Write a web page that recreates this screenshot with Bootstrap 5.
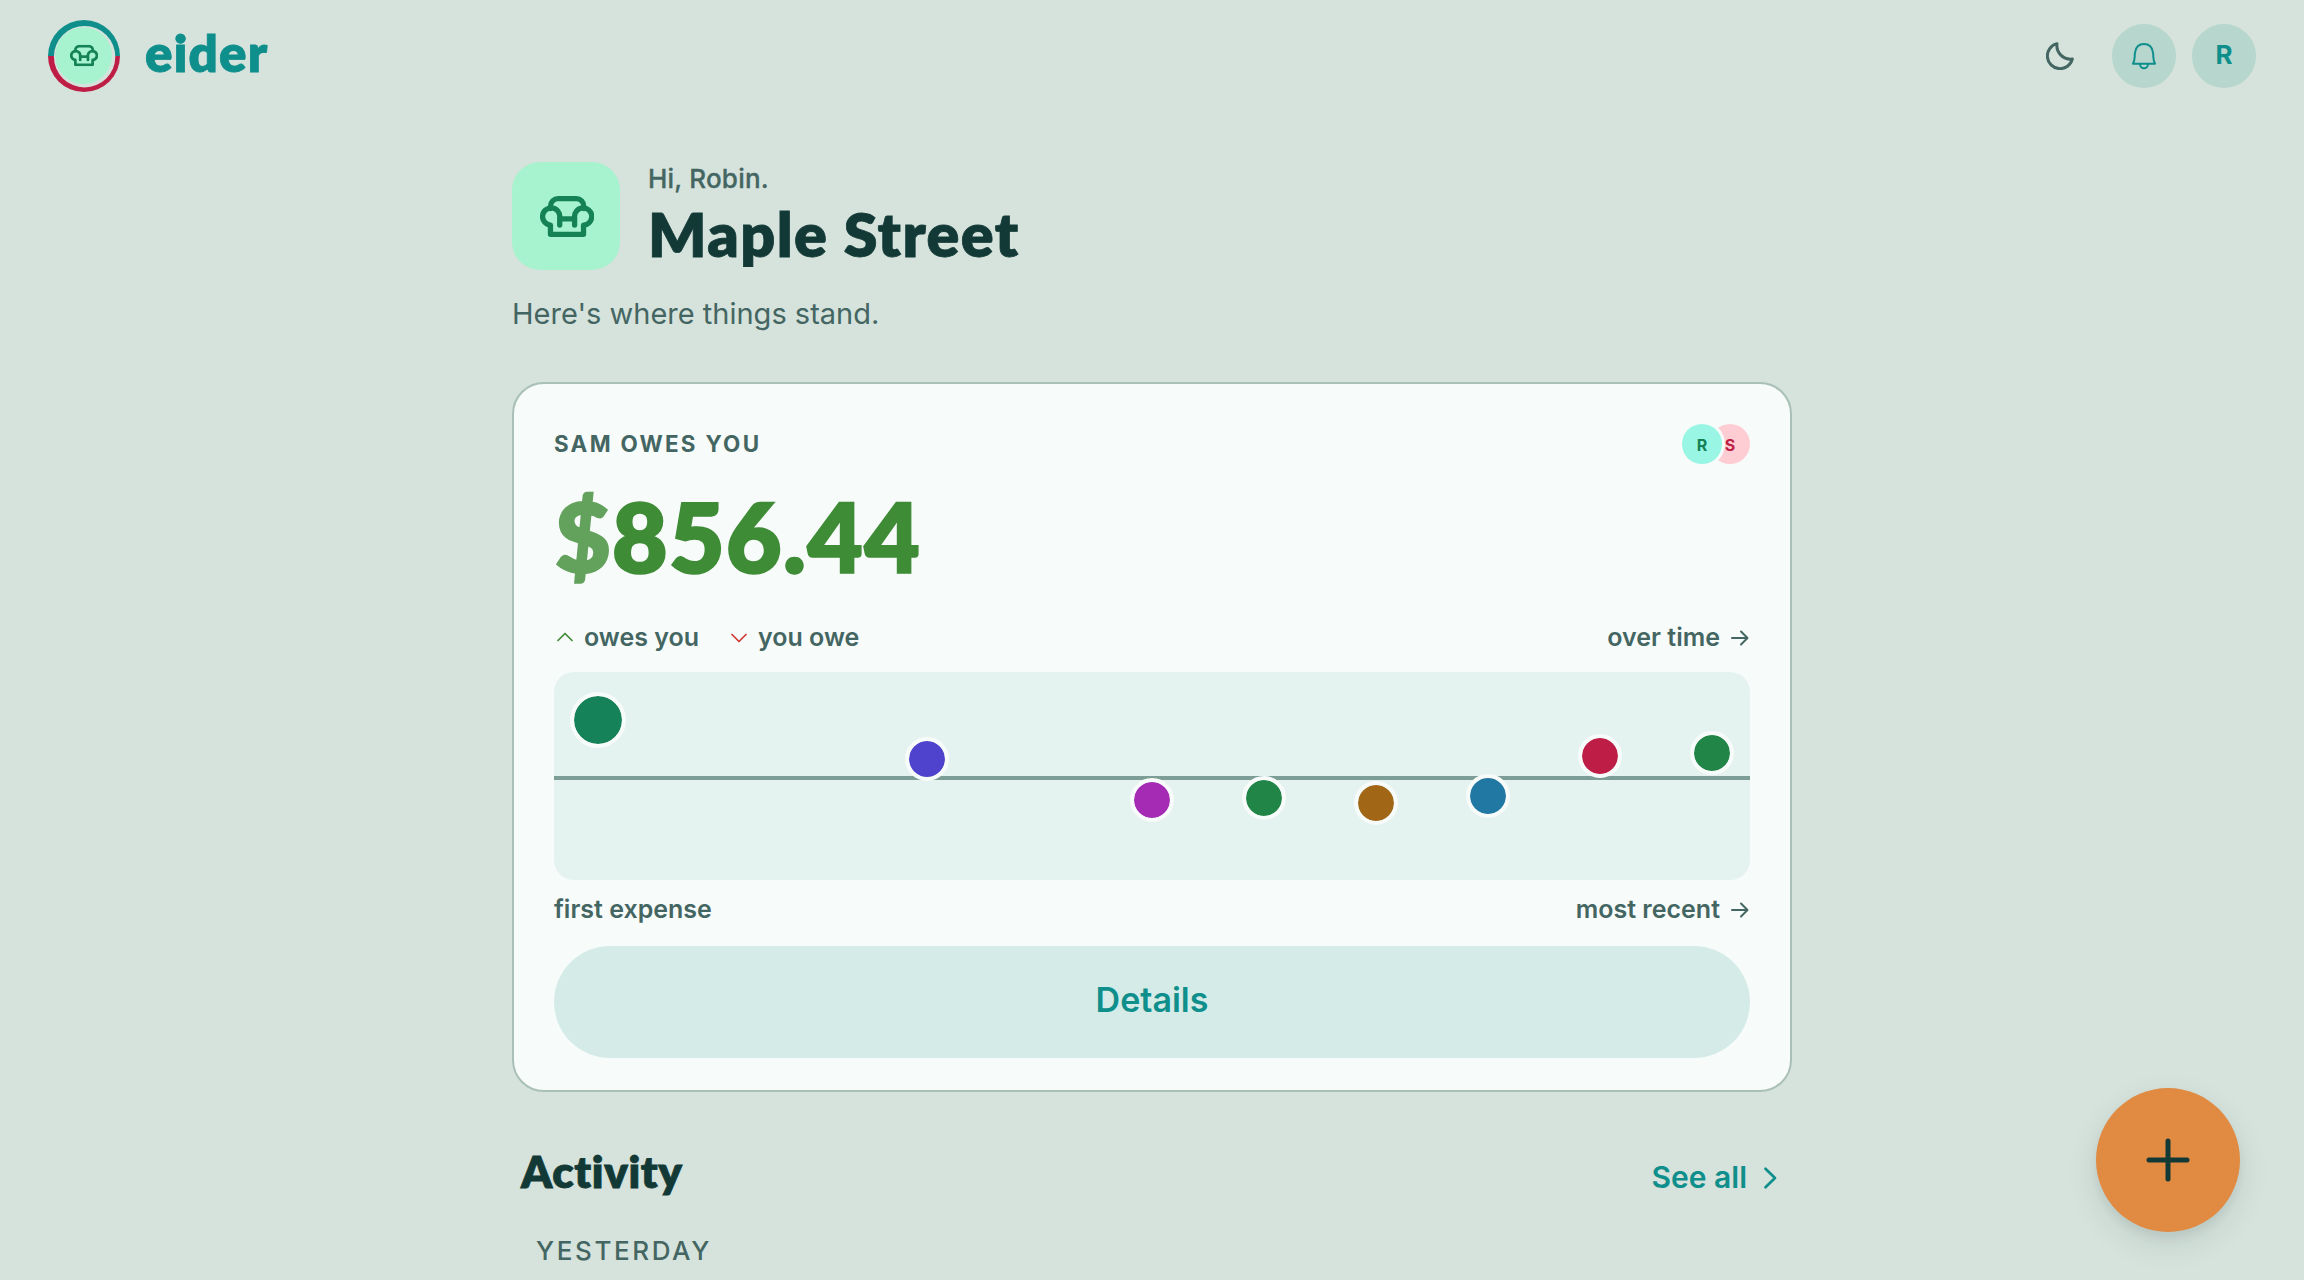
<!DOCTYPE html>
<html lang="en">
<head>
<meta charset="utf-8">
<meta name="viewport" content="width=device-width, initial-scale=1">
<title>eider</title>
<link rel="stylesheet" href="https://cdn.jsdelivr.net/npm/bootstrap@5.3.0/dist/css/bootstrap.min.css">
<style>
:root{--teal:#0f8f8c;--ink:#123936;--muted-ink:#446662;--leaf:#158256;--page:#d6e2dc;--paper:#f7fbfa}
body{background:var(--page);color:var(--muted-ink);font-family:Inter,sans-serif;height:100vh;overflow:hidden}
svg{display:block;flex:none}
svg.line{fill:none;stroke:currentColor;stroke-linecap:round;stroke-linejoin:round}
.display-face{font-family:Lato,Inter,sans-serif;font-weight:800;-webkit-text-stroke:.8px currentColor}
.topbar{height:112px;padding:0 48px}
.wordmark{font-size:51px;letter-spacing:1.2px;color:var(--teal);margin-left:25px;padding-bottom:6px;line-height:60px}
.round-btn{width:64px;height:64px;border-radius:50%;background:#b6d6ce;color:var(--teal);font-size:26px;font-weight:700;padding:0;border:0}
.round-btn.plain{background:none;color:var(--muted-ink)}
.page-col{width:1280px;padding-top:50px}
.home-icon{width:108px;height:108px;border-radius:28px;background:#a7f3d0;color:var(--leaf);padding:1px 0 0 2px}
.greeting{margin-left:28px}
.hello{font-size:26px;font-weight:500;line-height:33px;letter-spacing:.2px;-webkit-text-stroke:.3px currentColor}
.home-name{font-size:61px;line-height:77px;letter-spacing:1.4px;color:var(--ink);margin-left:1px}
.intro{font-size:29px;line-height:44px;margin:20px 0 46px}
.balance{border:2px solid #a9c0b7;border-radius:32px;background:var(--paper);padding:40px 40px 32px;color:inherit}
.owes-label{font-size:22.4px;font-weight:700;letter-spacing:2.3px}
.face{width:40px;height:40px;border-radius:50%;font-size:16px;font-weight:700;padding-top:1px}
.face-r{background:#99f6e4;color:var(--leaf);box-shadow:0 0 0 3px var(--paper);z-index:1}
.face-s{background:#fecdd3;color:#be1e45;margin-left:-12px}
.amount{font-size:96px;line-height:100px;margin:22px 0 31px 1px;letter-spacing:1.3px;color:#3f8c36;-webkit-text-stroke-width:1.6px}
.amount span{opacity:.8}
.note{font-size:25px;font-weight:600;line-height:40px}
.up-mark{color:#3f8c36;margin:0 9px 0 1px}
.down-mark{color:#cf3a35;margin:2px 9px 0 30px}
.arrow-mark{margin:2px 0 0 10px}
.chart{height:208px;margin:15px 0 9px;border-radius:20px;background:#e4f3ef}
.zero{position:absolute;left:0;right:0;top:104px;height:4px;background:#7d9e96}
.dot{position:absolute;width:44px;height:44px;margin:-22px 0 0 -22px;border-radius:50%;border:4px solid var(--paper)}
.dot.big{width:56px;height:56px;margin:-28px 0 0 -28px}
.details{height:112px;margin-top:17px;border-radius:56px;background:#d5ebe7;color:var(--teal);font-size:34px;font-weight:600;border:0;padding:0 0 5px}
.section-row{margin-top:49px;padding:0 15px 0 9px}
.section-name{font-size:44px;line-height:60px;letter-spacing:.6px;color:var(--ink)}
.see-all{font-size:30px;font-weight:600;color:var(--teal)}
.day{font-size:26px;font-weight:500;line-height:40px;letter-spacing:2.6px;margin-top:30px;padding-left:24px}
.fab{right:64px;bottom:48px;width:144px;height:144px;border-radius:50%;background:#e08a42;color:var(--ink);border:0;box-shadow:0 12px 32px rgba(18,57,54,.1),0 6px 12px rgba(18,57,54,.08)}
</style>
</head>
<body>
<svg width="0" height="0" class="position-absolute">
  <symbol id="armchair" viewBox="96 113 162 124">
    <path d="M127 151V144a23 23 0 0 1 23-23H205a23 23 0 0 1 23 23V151M155 201V178A26 26 0 1 0 127 201V229H227V201A26 26 0 1 0 200 178V201M155 182H200"/>
  </symbol>
</svg>
<header class="topbar d-flex align-items-center justify-content-between">
  <a href="#" class="d-flex align-items-center text-decoration-none">
    <svg width="72" height="72" viewBox="0 0 72 72">
      <path d="M0 36a36 36 0 0 1 72 0z" fill="#0f8f8c"/><path d="M0 36a36 36 0 0 0 72 0z" fill="#be1e45"/>
      <circle cx="36.6" cy="36.7" r="30.7" fill="#d6e2dc"/><circle cx="35.6" cy="35.7" r="28.4" fill="#a7f3d0"/>
      <use href="#armchair" x="22" y="24.8" width="28" height="21.4" fill="none" stroke="#158256" stroke-width="16" stroke-linejoin="round" stroke-linecap="round"/>
    </svg>
    <span class="wordmark display-face">eider</span>
  </a>
  <div class="d-flex align-items-center gap-3">
    <button class="round-btn plain d-flex align-items-center justify-content-center me-1" aria-label="Theme">
      <svg class="line" width="28" height="28" viewBox="20 64 84 84" stroke-width="9"><path d="M53 69A38 38 0 1 0 99 115A41 41 0 0 1 53 69Z"/></svg>
    </button>
    <button class="round-btn d-flex align-items-center justify-content-center" aria-label="Notifications">
      <svg class="line" width="26" height="28" viewBox="273 66 78 84" stroke-width="6"><path d="M279 131C286 121 283 110 285 98C287 81 298 72 312 72C326 72 337 81 339 98C341 110 338 121 345 131ZM300 132a12 13 0 0 0 24 0"/></svg>
    </button>
    <button class="round-btn d-flex align-items-center justify-content-center pb-1">R</button>
  </div>
</header>

<main class="page-col mx-auto">
  <div class="d-flex align-items-start">
    <div class="home-icon d-flex align-items-center justify-content-center">
      <svg class="line" width="54" height="41" stroke-width="16"><use href="#armchair"/></svg>
    </div>
    <div class="greeting">
      <div class="hello">Hi, Robin.</div>
      <h1 class="home-name display-face m-0">Maple Street</h1>
    </div>
  </div>
  <p class="intro">Here's where things stand.</p>

  <section class="balance">
    <div class="d-flex align-items-center justify-content-between">
      <div class="owes-label">SAM OWES YOU</div>
      <div class="d-flex">
        <span class="face face-r d-flex align-items-center justify-content-center">R</span>
        <span class="face face-s d-flex align-items-center justify-content-center">S</span>
      </div>
    </div>
    <div class="amount display-face"><span>$</span>856.44</div>
    <div class="note d-flex align-items-center justify-content-between">
      <div class="d-flex align-items-center">
        <svg class="line up-mark" width="20" height="12" viewBox="0 0 20 12" stroke-width="1.7"><path d="M3 9.500L10 2.500L17 9.500"/></svg>owes you
        <svg class="line down-mark" width="20" height="12" viewBox="0 0 20 12" stroke-width="1.7"><path d="M3 2.500L10 9.500L17 2.500"/></svg>you owe
      </div>
      <div class="d-flex align-items-center">over time
        <svg class="line arrow-mark" width="20" height="16" viewBox="0 0 20 16" stroke-width="2"><path d="M2 8H17.500M11 1.500L17.500 8L11 14.500"/></svg>
      </div>
    </div>
    <div class="chart position-relative" id="chart"><div class="zero"></div></div>
    <div class="note d-flex align-items-center justify-content-between">
      <span>first expense</span>
      <div class="d-flex align-items-center">most recent
        <svg class="line arrow-mark" width="20" height="16" viewBox="0 0 20 16" stroke-width="2"><path d="M2 8H17.500M11 1.500L17.500 8L11 14.500"/></svg>
      </div>
    </div>
    <button class="details d-flex w-100 align-items-center justify-content-center">Details</button>
  </section>

  <div class="section-row d-flex align-items-baseline justify-content-between">
    <h2 class="section-name display-face m-0">Activity</h2>
    <a href="#" class="see-all d-flex align-items-center text-decoration-none">See all
      <svg class="line" width="14" height="24" viewBox="0 0 14 24" style="margin-left:16px" stroke-width="2.700"><path d="M2.500 2.800L12 12L2.500 21.200"/></svg>
    </a>
  </div>
  <div class="day">YESTERDAY</div>
</main>

<button class="fab position-fixed d-flex align-items-center justify-content-center" aria-label="Add">
  <svg class="line" width="44" height="44" viewBox="0 0 44 44" stroke-width="5"><path d="M22 3V41M3 22H41"/></svg>
</button>

<script>
// Each point: x and y inside the chart, and its colour.
const points = [
  [44, 48, '#15825a', true], [373.4, 86.7, '#4f43cd'], [597.7, 127.7, '#a62bb4'], [710, 126, '#228548'],
  [822, 131, '#a16716'], [934, 124, '#2178a3'], [1046, 84, '#be1e45'], [1157.5, 80.7, '#228548']
];
const chart = document.getElementById('chart');
for (const [x, y, color, big] of points) {
  const dot = document.createElement('div');
  dot.className = big ? 'dot big' : 'dot';
  dot.style.cssText = `left:${x}px;top:${y}px;background-color:${color};background-clip:padding-box`;
  chart.append(dot);
}
</script>
<script src="https://cdn.jsdelivr.net/npm/bootstrap@5.3.0/dist/js/bootstrap.bundle.min.js"></script>
</body>
</html>
